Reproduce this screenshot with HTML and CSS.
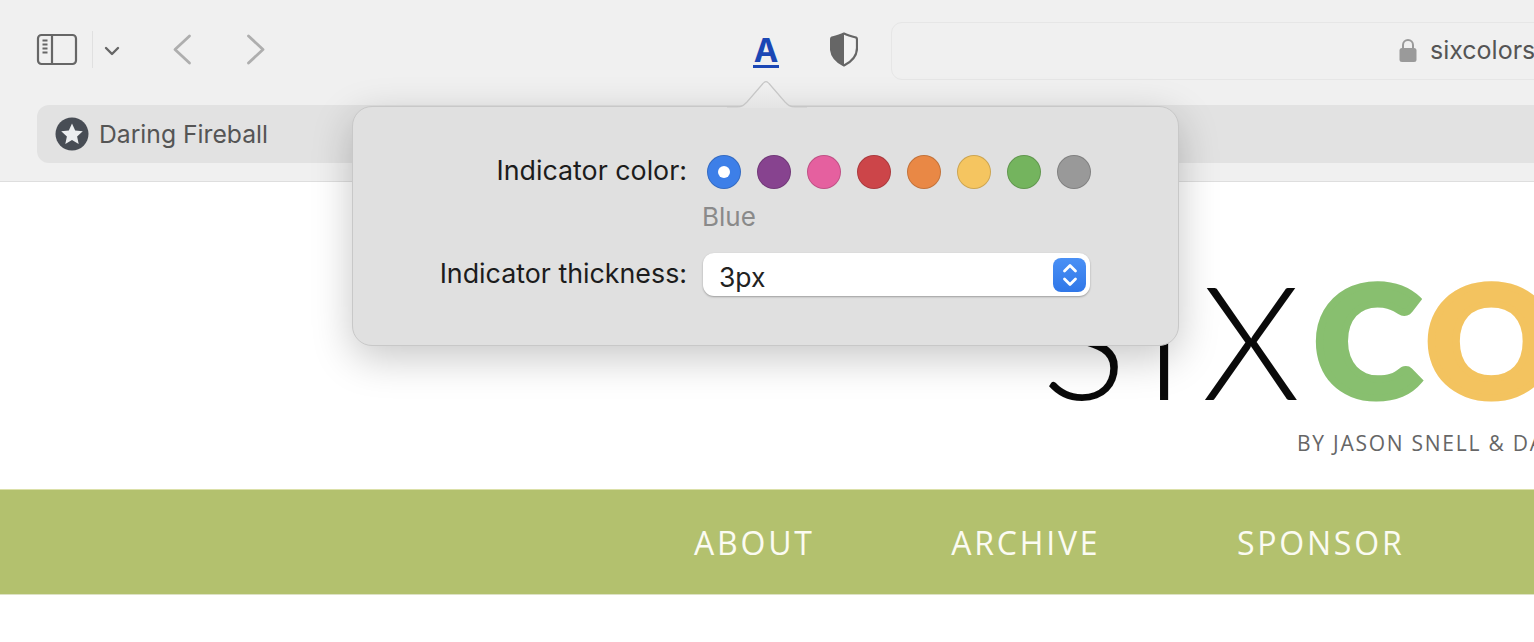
FILE: index.html
```html
<!DOCTYPE html>
<html lang="en">
<head>
<meta charset="utf-8">
<title>Six Colors</title>
<link rel="stylesheet" href="styles.css">
</head>
<body>
<div class="page">
  <header class="chrome">
    <div class="toolbar">
      <svg class="ico-sidebar" width="42" height="33" viewBox="0 0 42 33"><rect x="2" y="2" width="38" height="29" rx="3.5" fill="none" stroke="#666" stroke-width="2.2"/><path d="M16 2v29" stroke="#666" stroke-width="2.2"/><path d="M6.5 7.5h5M6.5 11.5h5M6.5 15.5h5M6.5 19.5h5" stroke="#666" stroke-width="1.8"/></svg>
      <span class="tb-sep"></span>
      <svg class="ico-menu" width="16" height="10" viewBox="0 0 16 10"><path d="M2 2l6 6 6-6" fill="none" stroke="#666" stroke-width="2.4" stroke-linecap="round" stroke-linejoin="round"/></svg>
      <svg class="ico-back" width="20" height="31" viewBox="0 0 20 31"><path d="M17.500 2 3 15.500 17.500 29" fill="none" stroke="#aeaeae" stroke-width="2.800" stroke-linecap="round" stroke-linejoin="round"/></svg>
      <svg class="ico-fwd" width="20" height="31" viewBox="0 0 20 31"><path d="M2.500 2 17 15.500 2.500 29" fill="none" stroke="#aeaeae" stroke-width="2.800" stroke-linecap="round" stroke-linejoin="round"/></svg>
      <span class="reader-a">A</span>
      <svg class="ico-shield" width="28" height="35" viewBox="0 0 28 35"><path d="M14 1.500 C17 3 22 4.500 26 5.500 C27 6 27 7 27 8 V16 C27 24 21 30 14 33.500 C7 30 1 24 1 16 V8 C1 7 1 6 2 5.500 C6 4.500 11 3 14 1.500Z" fill="#f2f2f2" stroke="#666" stroke-width="2.200" stroke-linejoin="round"/><path d="M14 1.500 C11 3 6 4.500 2 5.500 C1 6 1 7 1 8 V16 C1 24 7 30 14 33.500Z" fill="#666"/></svg>
      <div class="urlbar">
        <svg class="ico-lock" width="18" height="25" viewBox="0 0 18 25"><path d="M4 11V7a5 5 0 0 1 10 0v4" fill="none" stroke="#9a9a9a" stroke-width="2"/><rect x="0.500" y="10" width="17" height="14" rx="2.500" fill="#9a9a9a"/></svg>
        <span class="url-text">sixcolors.com</span>
      </div>
    </div>
    <div class="favbar">
      <div class="fav-tab">
        <svg class="ico-star" width="34" height="34" viewBox="0 0 34 34"><circle cx="17" cy="17" r="16.500" fill="#484d55"/><path d="M17 6.500l3.200 7 7.600.8-5.700 5.100 1.600 7.500-6.700-3.800-6.700 3.800 1.600-7.500-5.700-5.100 7.600-.8z" fill="#eceef0"/></svg>
        <span class="fav-title">Daring Fireball</span>
      </div>
    </div>
  </header>
  <section class="masthead">
    <div class="logo"><span class="six">SIX</span><span class="colors"><span class="c-green">C</span><span class="c-yellow">O</span><span class="c-orange">L</span><span class="c-red">O</span><span class="c-purple">R</span><span class="c-blue">S</span></span></div>
    <div class="byline">BY JASON SNELL &amp; DAN MORAN</div>
  </section>
  <nav class="mainnav">
    <a class="nav-item">ABOUT</a>
    <a class="nav-item">ARCHIVE</a>
    <a class="nav-item">SPONSOR</a>
  </nav>

  <svg class="pop-arrow" width="80" height="28" viewBox="0 0 80 28"><defs><linearGradient id="ag" x1="0" y1="0" x2="0" y2="1"><stop offset="0" stop-color="#f1f1f1"/><stop offset="1" stop-color="#e4e4e4"/></linearGradient></defs><path d="M0 27 H10 C15 27 17 25 20 22 L36 3.500 C38 1 40 1 42 3.500 L58 22 C61 25 63 27 68 27 H80 V28 H0Z" fill="url(#ag)"/><path d="M0 27 H10 C15 27 17 25 20 22 L36 3.500 C38 1 40 1 42 3.500 L58 22 C61 25 63 27 68 27 H80" fill="none" stroke="#c6c6c6" stroke-width="1.200"/></svg>
  <div class="popover">
    <div class="pop-label">Indicator color:</div>
    <div class="swatches">
      <span class="swatch sw-blue selected"></span>
      <span class="swatch sw-purple"></span>
      <span class="swatch sw-pink"></span>
      <span class="swatch sw-red"></span>
      <span class="swatch sw-orange"></span>
      <span class="swatch sw-yellow"></span>
      <span class="swatch sw-green"></span>
      <span class="swatch sw-gray"></span>
    </div>
    <div></div>
    <div class="color-name">Blue</div>
    <div class="pop-label">Indicator thickness:</div>
    <div class="select">
      <span class="select-value">3px</span>
      <span class="stepper"><svg width="18" height="28" viewBox="0 0 18 28"><path d="M3.500 10 9 4.500 14.500 10M3.500 18 9 23.500 14.500 18" fill="none" stroke="#fff" stroke-width="2.800" stroke-linecap="round" stroke-linejoin="round"/></svg></span>
    </div>
  </div>
</div>
</body>
</html>
```
FILE: styles.css
```css
* { box-sizing: border-box; }
html, body { margin: 0; padding: 0; height: 100%; background: #fff; overflow: hidden; }
.page { position: relative; width: 1534px; height: 642px; overflow: hidden; font-family: Inter, "Liberation Sans", sans-serif; }

.chrome { height: 182px; background: #f0f0f0; border-bottom: 1px solid #dedede; display: flex; flex-direction: column; }
.toolbar { height: 105px; display: flex; align-items: center; padding-left: 36px; white-space: nowrap; flex: none; }
.ico-sidebar { flex: none; margin-top: -7px; }
.tb-sep { width: 1px; height: 37px; background: #e0e0e0; margin: -7px 0 0 14px; flex: none; }
.ico-menu { margin: -4px 0 0 11px; flex: none; }
.ico-back { margin: -7px 0 0 52px; flex: none; }
.ico-fwd { margin: -7px 0 0 54px; flex: none; }
.reader-a { margin: -3px 0 0 487px; width: 26px; text-align: center; font-size: 33px; font-weight: 700; line-height: 30px; color: #1b47b5; border-bottom: 3px solid #1b47b5; flex: none; }
.ico-shield { margin: -7px 0 0 51px; flex: none; }
.urlbar { margin: -4px 0 0 33px; width: 700px; height: 58px; flex: none; border: 1px solid #e6e6e6; border-radius: 11px; display: flex; align-items: center; padding-left: 507px; }
.ico-lock { flex: none; }
.url-text { margin: -2px 0 0 13px; font-size: 25px; color: #555; }

.favbar { flex: 1; padding-left: 37px; }
.fav-tab { height: 58px; background: #e2e2e2; border-radius: 12px 0 0 12px; display: flex; align-items: center; padding-left: 18px; }
.ico-star { flex: none; }
.fav-title { margin-left: 10px; font-size: 24.700px; color: #555; }

.masthead { height: 307px; padding: 78px 0 0 1042px; white-space: nowrap; }
.logo { height: 158px; line-height: 158px; display: flex; align-items: baseline; }
.six { font-family: Lato, sans-serif; font-weight: 300; font-size: 158px; color: #0a0a0a; letter-spacing: 17px; }
.colors { font-family: Lato, sans-serif; font-weight: 900; font-size: 152px; letter-spacing: 8px; margin-left: -3px; -webkit-text-stroke: 7px currentColor; transform: translateY(-3px) scaleX(1.06); transform-origin: left center; }
.c-green { color: #88bf6f; }
.c-yellow { color: #f3c35f; }
.c-orange { color: #e8894a; }
.c-red { color: #cc4a4d; }
.c-purple { color: #84458f; }
.c-blue { color: #3b7fe6; }
.byline { margin: 11px 0 0 255px; font-family: "Open Sans", sans-serif; font-size: 21px; letter-spacing: 1.750px; color: #666; }

.mainnav { height: 106px; background: #b3c16e; border-top: 1px solid #dbe0a8; border-bottom: 1px solid #dde2c4; display: flex; align-items: center; gap: 136.500px; padding-left: 694px; white-space: nowrap; }
.nav-item { font-family: "Open Sans", sans-serif; font-size: 32px; letter-spacing: 2.800px; color: #fbfbf2; }

.pop-arrow { position: absolute; left: 727px; top: 80px; z-index: 3; }
.popover { position: absolute; left: 352px; top: 106px; width: 827px; height: 240px; z-index: 2; background: #e0e0e0; border: 1px solid #c8c8c8; border-radius: 20px; box-shadow: 0 12px 40px rgba(0,0,0,.22); display: grid; grid-template-columns: 334px 387px; column-gap: 16px; grid-template-rows: 34px 64px 43px; padding: 48px 0 0 0; align-items: center; }
.pop-label { text-align: right; font-size: 26.800px; color: #1c1c1c; white-space: nowrap; padding-bottom: 4px; }
.swatches { display: flex; gap: 16px; padding-left: 3.600px; }
.swatch { width: 34px; height: 34px; border-radius: 50%; flex: none; border: 1px solid rgba(0,0,0,.16); display: flex; align-items: center; justify-content: center; }
.selected::after { content: ""; width: 12px; height: 12px; border-radius: 50%; background: #fff; }
.sw-blue { background: #3d7fe8; }
.sw-purple { background: #87438f; }
.sw-pink { background: #e5609f; }
.sw-red { background: #cc4549; }
.sw-orange { background: #e98845; }
.sw-yellow { background: #f5c560; }
.sw-green { background: #74b45e; }
.sw-gray { background: #999; }
.color-name { font-size: 26px; color: #8a8a8a; padding-bottom: 10px; margin-left: -1px; }
.select { height: 43px; width: 387px; background: #fff; border-radius: 11px; box-shadow: 0 1px 2px rgba(0,0,0,.3); display: flex; align-items: center; justify-content: space-between; padding: 0 4px 0 16px; }
.select-value { font-size: 26.500px; color: #222; padding-top: 4px; }
.stepper { width: 33px; height: 34px; border-radius: 8px; background: linear-gradient(#4a90f5, #3077e8); display: flex; align-items: center; justify-content: center; }
```
